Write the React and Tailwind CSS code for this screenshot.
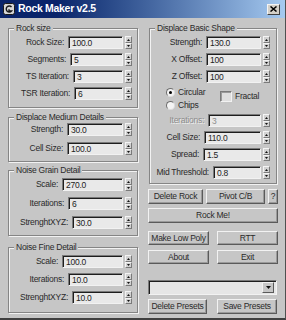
import React from 'react';

const font = "font-['Liberation_Sans',sans-serif]";

const Spinner = () => (
  <div className="flex flex-col w-[7px] h-[13px] ml-[2px]">
    <div className="h-[7px] flex items-center justify-center bg-[#d2d2d2] border border-t-[#f4f4f4] border-l-[#f4f4f4] border-b-[#7a7a7a] border-r-[#7a7a7a]">
      <svg width="3" height="2" viewBox="0 0 3 2">
        <path d="M1.5 0L3 2H0z" fill="#111" />
      </svg>
    </div>
    <div className="h-[6px] flex items-center justify-center bg-[#d2d2d2] border border-t-[#f4f4f4] border-l-[#f4f4f4] border-b-[#7a7a7a] border-r-[#7a7a7a]">
      <svg width="3" height="2" viewBox="0 0 3 2">
        <path d="M0 0H3L1.5 2z" fill="#111" />
      </svg>
    </div>
  </div>
);

const Field = ({ w, value, disabled }) => (
  <div
    className={`${w} h-[13px] bg-[#e9e9e9] border border-t-[#7a7a7a] border-l-[#7a7a7a] border-b-[#f2f2f2] border-r-[#f2f2f2] shadow-[inset_1px_1px_0_#1e1e1e] pl-[3px] pt-[1px] leading-[11px] ${
      disabled ? 'text-[#8c8c8c]' : 'text-[#222]'
    }`}
  >
    {value}
  </div>
);

const Row = ({ label, w, value, disabled }) => (
  <div className="flex items-center justify-end h-[13px]">
    <span className={`mr-[4px] ${disabled ? 'text-[#8c8c8c] [text-shadow:1px_1px_0_#f0f0f0]' : 'text-[#2a2a2a]'}`}>
      {label}
    </span>
    <Field w={w} value={value} disabled={disabled} />
    <Spinner />
  </div>
);

const Group = ({ title, className, children }) => (
  <div
    className={`flex flex-col border border-[#858585] shadow-[inset_1px_1px_0_#f2f2f2,1px_1px_0_#f2f2f2] ${className}`}
  >
    <div className="-mt-[7px] ml-[5px] px-[2px] self-start h-[12px] leading-[12px] bg-[#c6c6c6] text-[#2a2a2a]">
      {title}
    </div>
    {children}
  </div>
);

const Btn = ({ className, children }) => (
  <div
    className={`flex items-center justify-center bg-[#c6c6c6] border border-t-[#f2f2f2] border-l-[#f2f2f2] border-b-[#5a5a5a] border-r-[#5a5a5a] shadow-[inset_-1px_-1px_0_#9a9a9a] text-[#2a2a2a] ${className}`}
  >
    {children}
  </div>
);

const Radio = ({ checked, label }) => (
  <div className="flex items-center h-[10px]">
    <div className="w-[9px] h-[9px] rounded-full bg-[#f4f4f4] border border-t-[#6e6e6e] border-l-[#6e6e6e] border-b-[#dcdcdc] border-r-[#dcdcdc] flex items-center justify-center">
      {checked && <div className="w-[3px] h-[3px] rounded-full bg-[#000]" />}
    </div>
    <span className="ml-[3px] text-[#2a2a2a]">{label}</span>
  </div>
);

const TitleBar = () => (
  <div className="h-[18px] flex items-center bg-linear-to-r from-[#0a246a] via-[#0a246a] via-[20%] to-[#a6caf0] pl-[3px] pr-[5px]">
    <svg width="12" height="12" viewBox="0 0 12 12">
      <rect x="0.5" y="0.5" width="11" height="11" rx="2" fill="#d6d6d6" stroke="#1a1a1a" />
      <path d="M8.5 4A3 3 0 1 0 8.5 8H6V6.3" fill="none" stroke="#1a1a1a" strokeWidth="1.4" />
    </svg>
    <span className="ml-[3px] font-bold text-[10.5px] tracking-[-0.3px] text-white">
      Rock Maker v2.5
    </span>
    <div className="ml-auto w-[13px] h-[11px] flex items-center justify-center bg-[#d4d0c8] border border-t-[#f4f4f4] border-l-[#f4f4f4] border-b-[#404040] border-r-[#404040]">
      <svg width="7" height="6" viewBox="0 0 7 6">
        <path d="M0.5 0.5L6.5 5.5M6.5 0.5L0.5 5.5" stroke="#000" strokeWidth="1.5" />
      </svg>
    </div>
  </div>
);

export default function App() {
  return (
    <div className={`w-[286px] h-[320px] bg-[#c6c6c6] flex flex-col border-r border-b-2 border-r-[#505050] border-b-[#404040] text-[8.5px] tracking-[-0.25px] ${font}`}>
      <TitleBar />
      <div className="flex pl-[8px] pt-[10px] gap-[10px]">
        {/* left column */}
        <div className="w-[130px] flex flex-col">
          <Group title="Rock size" className="h-[80px]">
            <div className="mt-[2px] flex flex-col gap-[4px] pr-[5px]">
              <Row label="Rock Size:" w="w-[55px]" value="100.0" />
              <Row label="Segments:" w="w-[53px]" value="5" />
              <Row label="TS Iteration:" w="w-[50px]" value="3" />
              <Row label="TSR Iteration:" w="w-[49px]" value="6" />
            </div>
          </Group>
          <Group title="Displace Medium Details" className="mt-[9px] h-[45px]">
            <div className="flex flex-col gap-[6px] pr-[5px]">
              <Row label="Strength:" w="w-[56px]" value="30.0" />
              <Row label="Cell Size:" w="w-[56px]" value="100.0" />
            </div>
          </Group>
          <Group title="Noise Grain Detail" className="mt-[8px] h-[66px]">
            <div className="mt-[2px] flex flex-col gap-[6px] pr-[5px]">
              <Row label="Scale:" w="w-[61px]" value="270.0" />
              <Row label="Iterations:" w="w-[55px]" value="6" />
              <Row label="StrenghtXYZ:" w="w-[51px]" value="30.0" />
            </div>
          </Group>
          <Group title="Noise Fine Detail" className="mt-[11px] h-[66px]">
            <div className="mt-[2px] flex flex-col gap-[5px] pr-[5px]">
              <Row label="Scale:" w="w-[61px]" value="100.0" />
              <Row label="Iterations:" w="w-[55px]" value="10.0" />
              <Row label="StrenghtXYZ:" w="w-[51px]" value="10.0" />
            </div>
          </Group>
        </div>

        {/* right column */}
        <div className="w-[130px] flex flex-col">
          <Group title="Displace Basic Shape" className="mx-[1px] h-[156px]">
            <div className="mt-[2px] flex flex-col pr-[6px]">
              <Row label="Strength:" w="w-[55px]" value="130.0" />
              <div className="mt-[4px]">
                <Row label="X Offset:" w="w-[55px]" value="100" />
              </div>
              <div className="mt-[4px]">
                <Row label="Z Offset:" w="w-[55px]" value="100" />
              </div>
              <div className="mt-[4px] flex pl-[16px]">
                <div className="w-[54px] flex flex-col gap-[3px]">
                  <Radio checked label="Circular" />
                  <Radio label="Chips" />
                </div>
                <div className="mt-[4px] flex items-center h-[11px]">
                  <div className="w-[12px] h-[11px] bg-[#dedede] border border-t-[#7a7a7a] border-l-[#7a7a7a] border-b-[#f2f2f2] border-r-[#f2f2f2] shadow-[inset_1px_1px_0_#9a9a9a]" />
                  <span className="ml-[3px] text-[#2a2a2a]">Fractal</span>
                </div>
              </div>
              <div className="mt-[4px]">
                <Row label="Iterations:" w="w-[53px]" value="3" disabled />
              </div>
              <div className="mt-[4px]">
                <Row label="Cell Size:" w="w-[57px]" value="110.0" />
              </div>
              <div className="mt-[4px]">
                <Row label="Spread:" w="w-[58px]" value="1.5" />
              </div>
              <div className="mt-[5px]">
                <Row label="Mid Threshold:" w="w-[48px]" value="0.8" />
              </div>
            </div>
          </Group>

          <div className="mt-[5px] flex gap-[3px]">
            <Btn className="w-[55px] h-[15px]">Delete Rock</Btn>
            <Btn className="w-[59px] h-[15px]">Pivot C/B</Btn>
            <Btn className="w-[10px] h-[15px]">?</Btn>
          </div>
          <Btn className="mt-[4px] w-[130px] h-[15px]">Rock Me!</Btn>
          <div className="mt-[8px] flex justify-between">
            <Btn className="w-[61px] h-[14px]">Make Low Poly</Btn>
            <Btn className="w-[61px] h-[14px]">RTT</Btn>
          </div>
          <div className="mt-[5px] flex justify-between">
            <Btn className="w-[61px] h-[14px]">About</Btn>
            <Btn className="w-[61px] h-[14px]">Exit</Btn>
          </div>
          <div className="mt-[16px] w-[129px] h-[15px] flex items-center justify-end pr-[2px] bg-[#e6e6e6] border border-t-[#7a7a7a] border-l-[#7a7a7a] border-b-[#f2f2f2] border-r-[#f2f2f2] shadow-[inset_1px_1px_0_#1e1e1e]">
            <div className="w-[12px] h-[11px] flex items-center justify-center bg-[#c6c6c6] border border-t-[#f2f2f2] border-l-[#f2f2f2] border-b-[#5a5a5a] border-r-[#5a5a5a]">
              <svg width="5" height="3" viewBox="0 0 5 3">
                <path d="M0 0H5L2.5 3z" fill="#111" />
              </svg>
            </div>
          </div>
          <div className="mt-[4px] flex justify-between w-[129px]">
            <Btn className="w-[59px] h-[15px]">Delete Presets</Btn>
            <Btn className="w-[60px] h-[15px]">Save Presets</Btn>
          </div>
        </div>
      </div>
    </div>
  );
}
